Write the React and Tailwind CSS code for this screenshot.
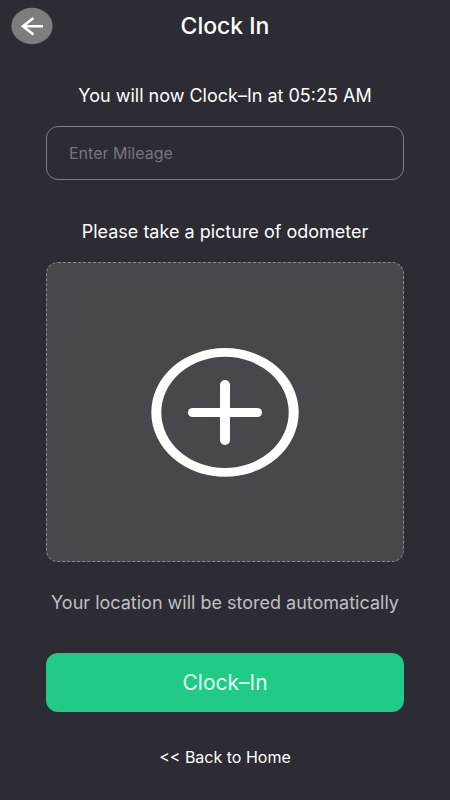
import React, { useState } from 'react';

const BackArrow = () => (
  <svg viewBox="0 0 42 38" className="h-[38px] w-[42px]" aria-hidden="true">
    <ellipse cx="21" cy="19" rx="20.6" ry="18.2" fill="#7d7c80" />
    <path d="M32 19.2H12M22.4 11L12 19.2L22.4 27.4" fill="none" stroke="#fff" strokeWidth="2.6" />
  </svg>
);

const PlusIcon = () => (
  <svg viewBox="0 0 148 130" className="h-[130px] w-[148px]" aria-hidden="true">
    <path
      fillRule="evenodd"
      fill="#fff"
      d="M0.3 65.4a73.7 64.4 0 1 0 147.4 0a73.7 64.4 0 1 0 -147.4 0zM10.3 65.4a63.7 55.6 0 1 0 127.4 0a63.7 55.6 0 1 0 -127.4 0z"
    />
    <rect x="69" y="33" width="10" height="65" rx="5" fill="#fff" />
    <rect x="37" y="61" width="74" height="9" rx="4.5" fill="#fff" />
  </svg>
);

const App = () => {
  const [mileage, setMileage] = useState('');

  return (
    <div className="min-h-screen bg-[#2d2b34] font-['Inter',sans-serif] text-white">
      <header className="grid grid-cols-[1fr_auto_1fr] items-center px-[11px] pt-[7px]">
        <button type="button" aria-label="Go back" className="justify-self-start">
          <BackArrow />
        </button>
        <h1 className="text-[23px] leading-6 font-medium">Clock In</h1>
      </header>

      <main className="flex flex-col px-[46px] pt-[39px] pb-8 text-center">
        <label htmlFor="mileage" className="text-lg leading-6">
          You will now Clock–In at 05:25 AM
        </label>
        <input
          id="mileage"
          type="text"
          inputMode="numeric"
          placeholder="Enter Mileage"
          value={mileage}
          onChange={(e) => setMileage(e.target.value)}
          className="mt-[18px] h-[54px] w-full rounded-xl border border-[#7f7e85] bg-transparent px-[22px] text-base placeholder:text-[#77767c] focus:outline-none"
        />

        <p className="mt-10 text-lg leading-6">Please take a picture of odometer</p>
        <button
          type="button"
          aria-label="Add odometer picture"
          className="mt-[18px] flex h-[300px] w-full items-center justify-center rounded-xl border border-dashed border-[#8a898e] bg-[#47474c]"
        >
          <PlusIcon />
        </button>

        <p className="mt-[29px] text-lg leading-6 whitespace-nowrap text-[#c0bfc3]">
          Your location will be stored automatically
        </p>
        <button type="button" className="mt-[38px] h-[59px] w-full rounded-xl bg-[#22ca88] text-[21px] text-[#e0fff4]">
          Clock–In
        </button>
        <a href="#home" className="mt-[33px] self-center text-base leading-6">
          &lt;&lt; Back to Home
        </a>
      </main>
    </div>
  );
};

export default App;
